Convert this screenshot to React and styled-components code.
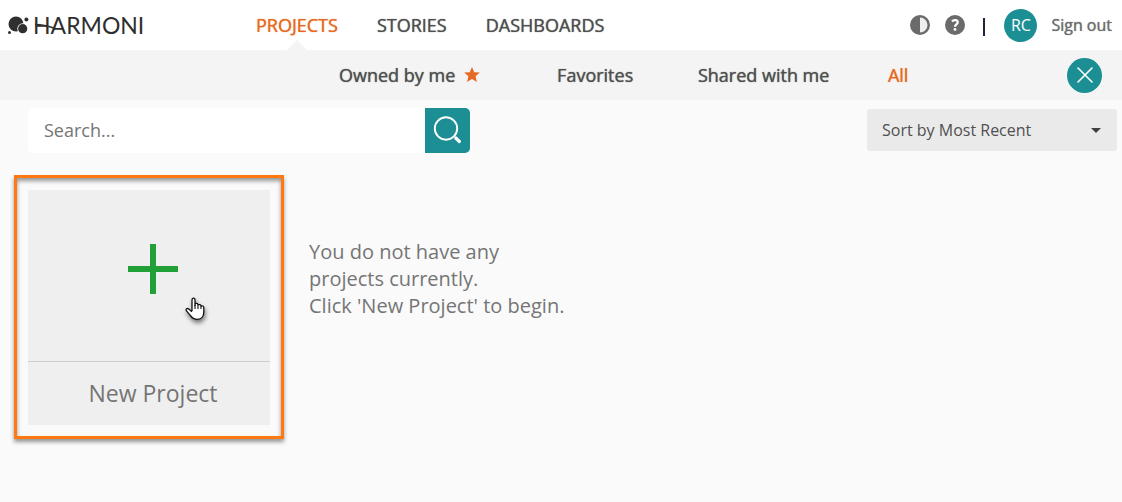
import React, { useState } from 'react';
import styled, { createGlobalStyle } from 'styled-components';

const GlobalStyle = createGlobalStyle`
    * {
        box-sizing: border-box;
    }

    body {
        margin: 0;
        background-color: #fafafa;
        color: #6e6e6e;
        font-family: 'Open Sans', 'Noto Sans', sans-serif;
    }

    button, input, select {
        font-family: inherit;
    }
`;

const HeaderContainer = styled.header`
    display: flex;
    align-items: center;
    height: 50px;
    padding: 0 10px 0 8px;
    background-color: #fff;
`;

const LogoLink = styled.a`
    display: flex;
    align-items: center;
    flex: 0 0 248px;
    gap: 4px;
    color: #2f2f2f;
    text-decoration: none;
`;

const LogoText = styled.span`
    position: relative;
    font-family: Lato, sans-serif;
    font-size: 23px;
    line-height: 28px;
`;

const LogoSwash = styled.svg`
    position: absolute;
    left: 2px;
    top: 9px;
`;

const MainNav = styled.nav`
    display: flex;
    gap: 39px;
    height: 100%;
`;

const MainNavLink = styled.a`
    position: relative;
    display: flex;
    align-items: center;
    color: ${(props) => (props.$active ? '#e66a25' : '#505050')};
    font-size: 18px;
    text-decoration: none;
    text-shadow: 0 0 1px currentColor;

    &::after {
        content: '';
        display: ${(props) => (props.$active ? 'block' : 'none')};
        position: absolute;
        bottom: 0;
        left: 50%;
        margin-left: -10px;
        border: 10px solid transparent;
        border-top: 0;
        border-bottom-color: #f4f4f4;
    }
`;

const UserArea = styled.div`
    display: flex;
    align-items: center;
    margin-left: auto;
`;

const IconButton = styled.button`
    display: flex;
    margin-right: 15px;
    padding: 0;
    border: 0;
    background: none;
    cursor: pointer;
`;

const Divider = styled.span`
    width: 2px;
    height: 18px;
    margin: 4px 19px 0 3px;
    background-color: #23233a;
`;

const Avatar = styled.button`
    width: 33px;
    height: 33px;
    margin-right: 14px;
    padding: 0;
    border: 0;
    border-radius: 50%;
    background-color: #1b8f94;
    color: #fff;
    font-size: 16px;
    cursor: pointer;
`;

const SignOut = styled.a`
    color: #6e6e6e;
    font-size: 16px;
    text-decoration: none;
    text-shadow: 0 0 1px currentColor;
`;

const FilterBar = styled.div`
    display: flex;
    align-items: center;
    justify-content: space-between;
    height: 50px;
    padding: 0 20px 0 28%;
    background-color: #f4f4f4;
`;

const FilterNav = styled.nav`
    display: grid;
    grid-template-columns: 191fr 180fr 157fr 112fr;
    flex: 0 1 640px;
    justify-items: center;
`;

const FilterLink = styled.a`
    display: flex;
    align-items: center;
    gap: 9px;
    color: ${(props) => (props.$active ? '#e66a25' : '#505050')};
    font-size: 18px;
    text-decoration: none;
    text-shadow: 0 0 1px currentColor;
    white-space: nowrap;
`;

const CloseButton = styled.button`
    display: flex;
    align-items: center;
    justify-content: center;
    width: 35px;
    height: 35px;
    padding: 0;
    border: 0;
    border-radius: 50%;
    background-color: #1b8f94;
    cursor: pointer;
`;

const Toolbar = styled.div`
    display: flex;
    align-items: flex-start;
    justify-content: space-between;
    padding: 8px 5px 0 28px;
`;

const SearchForm = styled.form`
    display: flex;
    flex: 0 1 442px;
    height: 45px;
`;

const SearchInput = styled.input`
    flex: 1;
    min-width: 0;
    padding: 0 16px 2px;
    border: 0;
    border-radius: 5px 0 0 5px;
    background-color: #fff;
    color: #505050;
    font-size: 18px;

    &::placeholder {
        color: #757575;
    }
`;

const SearchButton = styled.button`
    display: flex;
    align-items: center;
    justify-content: center;
    width: 45px;
    padding: 0;
    border: 0;
    border-radius: 0 5px 5px 0;
    background-color: #1b8f94;
    cursor: pointer;
`;

const SortBox = styled.div`
    position: relative;
    flex: 0 0 250px;
    margin-top: 1px;
`;

const SortSelect = styled.select`
    width: 100%;
    height: 42px;
    padding: 0 40px 0 15px;
    border: 0;
    border-radius: 3px;
    background-color: #eaeaea;
    color: #505050;
    font-size: 16px;
    appearance: none;
`;

const SortArrow = styled.svg`
    position: absolute;
    top: 19px;
    right: 16px;
    pointer-events: none;
`;

const Content = styled.main`
    display: flex;
    align-items: flex-start;
    gap: 25px;
    padding: 22px 14px;
`;

const HighlightFrame = styled.div`
    padding: 12px 11px 11px;
    border: 3px solid #ff7811;
    box-shadow: 0 3px 4px rgba(0, 0, 0, 0.4), inset 0 3px 4px rgba(0, 0, 0, 0.4);
`;

const NewProjectCard = styled.button`
    position: relative;
    display: flex;
    flex-direction: column;
    width: 242px;
    padding: 0;
    border: 0;
    background-color: #efefef;
    color: #757575;
    cursor: pointer;
`;

const CardPicture = styled.span`
    display: flex;
    align-items: center;
    justify-content: center;
    width: 100%;
    height: 172px;
    padding: 0 0 14px 8px;
    border-bottom: 1px solid #cdcdcd;
`;

const CardTitle = styled.span`
    width: 100%;
    padding-left: 8px;
    font-size: 23px;
    line-height: 63px;
`;

const HandCursor = styled.svg`
    position: absolute;
    left: 156px;
    top: 107px;
    filter: drop-shadow(1px 3px 2px rgba(0, 0, 0, 0.5));
`;

const EmptyMessage = styled.p`
    margin: 63px 0 0;
    color: #757575;
    font-size: 20px;
    line-height: 27px;
`;

const LogoMark = () => (
    <svg width="21" height="19" viewBox="0 0 21 19" aria-hidden="true">
        <circle cx="8" cy="8" r="7.5" fill="#2f2f2f" />
        <circle cx="14.7" cy="12.7" r="5.4" fill="#fff" />
        <circle cx="14.7" cy="12.7" r="4.6" fill="#2f2f2f" />
        <circle cx="18.4" cy="3.6" r="2" fill="#2f2f2f" />
        <circle cx="1.5" cy="16.5" r="1.5" fill="#2f2f2f" />
    </svg>
);

const Header = () => (
    <HeaderContainer>
        <LogoLink href="#home">
            <LogoMark />
            <LogoText>
                HARMONI
                <LogoSwash width="32" height="12" viewBox="0 0 32 12" aria-hidden="true">
                    <path d="M0 4.5C6 4.5 12 5.5 20 8.5" fill="none" stroke="#2f2f2f" strokeWidth="1.6" />
                </LogoSwash>
            </LogoText>
        </LogoLink>
        <MainNav>
            <MainNavLink href="#projects" $active>PROJECTS</MainNavLink>
            <MainNavLink href="#stories">STORIES</MainNavLink>
            <MainNavLink href="#dashboards">DASHBOARDS</MainNavLink>
        </MainNav>
        <UserArea>
            <IconButton type="button" aria-label="Contrast">
                <svg width="20" height="20" viewBox="0 0 20 20">
                    <circle cx="10" cy="10" r="10" fill="#6b6b6b" />
                    <path d="M10 2.5a7.5 7.5 0 0 1 0 15z" fill="#eee" />
                </svg>
            </IconButton>
            <IconButton type="button" aria-label="Help">
                <svg width="20" height="20" viewBox="0 0 20 20">
                    <circle cx="10" cy="10" r="10" fill="#6b6b6b" />
                    <path d="M7 6.4C8.6 4.6 12.7 4.6 12.7 7.3C12.7 9.4 10 9.2 10 11.8" fill="none" stroke="#fff" strokeWidth="2.3" />
                    <circle cx="10" cy="14.4" r="1.4" fill="#fff" />
                </svg>
            </IconButton>
            <Divider />
            <Avatar type="button">RC</Avatar>
            <SignOut href="#signout">Sign out</SignOut>
        </UserArea>
    </HeaderContainer>
);

const Filters = () => (
    <FilterBar>
        <FilterNav>
            <FilterLink href="#owned">
                Owned by me
                <svg width="16" height="16" viewBox="0 0 16 16" aria-hidden="true">
                    <path d="M8 0L10.3 5.2L15.8 5.6L11.6 9.3L12.9 15L8 12L3.1 15L4.4 9.3L.2 5.6L5.7 5.2z" fill="#e66a25" />
                </svg>
            </FilterLink>
            <FilterLink href="#favorites">Favorites</FilterLink>
            <FilterLink href="#shared">Shared with me</FilterLink>
            <FilterLink href="#all" $active>All</FilterLink>
        </FilterNav>
        <CloseButton type="button" aria-label="Close">
            <svg width="16" height="16" viewBox="0 0 16 16">
                <path d="M1 1L15 15M15 1L1 15" stroke="#fff" strokeWidth="1.6" strokeLinecap="round" />
            </svg>
        </CloseButton>
    </FilterBar>
);

const App = () => {
    const [search, setSearch] = useState('');

    return (
        <React.Fragment>
            <GlobalStyle />
            <Header />
            <Filters />
            <Toolbar>
                <SearchForm onSubmit={(e) => e.preventDefault()}>
                    <SearchInput
                        type="text"
                        aria-label="Search"
                        placeholder="Search..."
                        value={search}
                        onChange={(e) => setSearch(e.target.value)}
                    />
                    <SearchButton type="submit" aria-label="Search">
                        <svg width="29" height="29" viewBox="0 0 29 29">
                            <circle cx="13" cy="12.5" r="11.2" fill="none" stroke="#fff" strokeWidth="1.9" />
                            <path d="M22.8 22L26.3 25.5" stroke="#fff" strokeWidth="3.2" strokeLinecap="round" />
                        </svg>
                    </SearchButton>
                </SearchForm>
                <SortBox>
                    <SortSelect aria-label="Sort projects">
                        <option>Sort by Most Recent</option>
                    </SortSelect>
                    <SortArrow width="10" height="5" viewBox="0 0 10 5" aria-hidden="true">
                        <path d="M0 0H10L5 5z" fill="#404040" />
                    </SortArrow>
                </SortBox>
            </Toolbar>
            <Content>
                <HighlightFrame>
                    <NewProjectCard type="button">
                        <CardPicture>
                            <svg width="50" height="50" viewBox="0 0 50 50" aria-hidden="true">
                                <path d="M25 0V50M0 25H50" stroke="#20a037" strokeWidth="6" />
                            </svg>
                        </CardPicture>
                        <CardTitle>New Project</CardTitle>
                        <HandCursor width="22" height="24" viewBox="0 0 22 24" aria-hidden="true">
                            <path
                                d="M8 14V3.2C8 .5 11 .5 11 3.2V8.5V7.2C12 5.8 14 6.4 14 8V8.2C15 7 17 7.6 17 9V9.4C18 8.4 19.8 9 19.8 10.5V15C19.8 19 17.5 22.3 13.5 22.3C9.8 22.3 8 21 6.3 18.3L2.5 13.8C1.3 12 3.3 10.8 4.8 12L8 14.8"
                                fill="#fff"
                                stroke="#111"
                                strokeWidth="1.3"
                                strokeLinejoin="round"
                            />
                            <path d="M11 8V12M14 8.5V12M17 9.5V12" stroke="#111" strokeWidth="1.1" />
                        </HandCursor>
                    </NewProjectCard>
                </HighlightFrame>
                <EmptyMessage>
                    You do not have any
                    <br />
                    projects currently.
                    <br />
                    Click 'New Project' to begin.
                </EmptyMessage>
            </Content>
        </React.Fragment>
    );
};

export default App;
